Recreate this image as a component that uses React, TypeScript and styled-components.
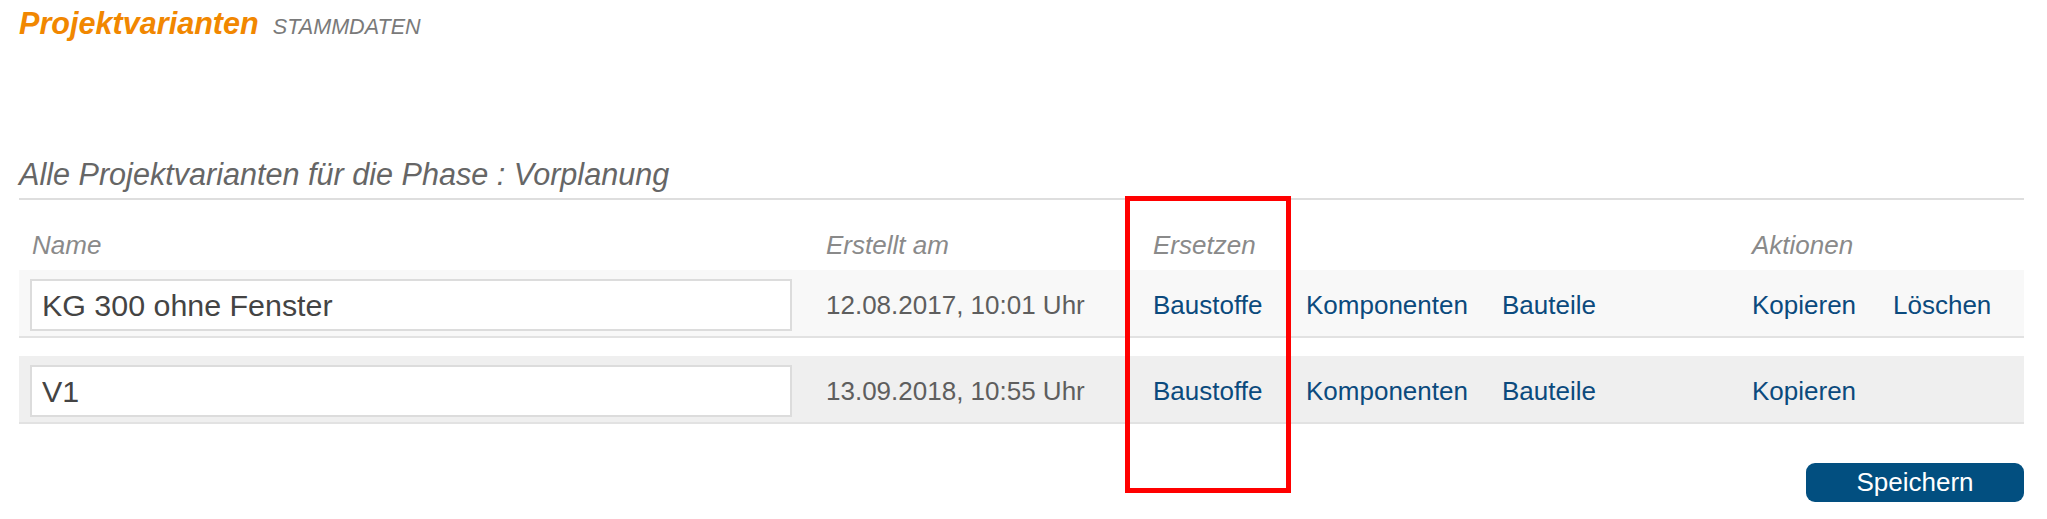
import React from "react";
import styled, {createGlobalStyle} from "styled-components";


const GlobalStyle = createGlobalStyle`
	body {
		margin: 0;
		background: #fff;
		font-family: "Liberation Sans", Arial, sans-serif;
	}
`;

const Page = styled.div`
	position: relative;
	padding: 6px 23px 0 19px;
`;

const Header = styled.div`
	display: flex;
	align-items: baseline;
	gap: 14px;
	line-height: 34px;
`;

const Title = styled.h1`
	margin: 0;
	font-size: 30.6px;
	font-weight: bold;
	font-style: italic;
	color: #f18700;
`;

const Section = styled.span`
	font-size: 21.6px;
	font-style: italic;
	color: #7a7a7a;
	text-transform: uppercase;
`;

const Subtitle = styled.h2`
	margin: 113px 0 0;
	padding-bottom: 7px;
	border-bottom: 2px solid #dedede;
	font-size: 30.6px;
	line-height: 34px;
	font-weight: normal;
	font-style: italic;
	color: #666;
`;

const Grid = styled.div<{$variant?: "head" | "light" | "dark"}>`
	display: grid;
	grid-template-columns: 796px 327px 153px 196px 250px 141px 1fr;
	align-items: center;
	padding: ${(p) => (p.$variant === "head" ? "30px 0 10px 11px" : "9px 0 5px 11px")};
	margin-top: ${(p) => (p.$variant === "dark" ? "18px" : "0")};
	background: ${(p) => (p.$variant === "light" ? "#f8f8f8" : p.$variant === "dark" ? "#efefef" : "transparent")};
	border-bottom: ${(p) => (p.$variant === "head" ? "none" : "2px solid #e2e2e2")};
	font-size: 26px;
	line-height: 30px;
`;

const HeadCell = styled.div<{$indent?: number}>`
	font-style: italic;
	color: #8a8a8a;
	padding-left: ${(p) => p.$indent || 0}px;
`;

const NameInput = styled.input`
	box-sizing: border-box;
	width: 762px;
	height: 52px;
	padding: 0 10px;
	border: 2px solid #dcdcdc;
	background: #fff;
	font-family: inherit;
	font-size: 30.4px;
	color: #444;
	outline: none;
`;

const DateCell = styled.div`
	color: #5e5e5e;
`;

const Link = styled.a`
	color: #0b4a7d;
	text-decoration: none;
	cursor: pointer;
`;

const Footer = styled.div`
	display: flex;
	justify-content: flex-end;
	margin-top: 39px;
`;

const SaveButton = styled.button`
	width: 218px;
	height: 39px;
	border: none;
	border-radius: 9px;
	background: #024f80;
	color: #fff;
	font-family: inherit;
	font-size: 26px;
	cursor: pointer;
`;

const Highlight = styled.div`
	position: absolute;
	left: 1125px;
	top: 196px;
	width: 166px;
	height: 297px;
	box-sizing: border-box;
	border: 5px solid #f00;
	pointer-events: none;
`;

type Variant = {
	id: number;
	name: string;
	created: string;
	deletable: boolean;
};

const variants: Variant[] = [
	{id: 1, name: "KG 300 ohne Fenster", created: "12.08.2017, 10:01 Uhr", deletable: true},
	{id: 2, name: "V1", created: "13.09.2018, 10:55 Uhr", deletable: false},
];


export default function App() {
	return (
		<Page>
			<GlobalStyle/>
			<Header>
				<Title>Projektvarianten</Title>
				<Section>Stammdaten</Section>
			</Header>

			<Subtitle>Alle Projektvarianten für die Phase : Vorplanung</Subtitle>

			<Grid $variant="head">
				<HeadCell $indent={2}>Name</HeadCell>
				<HeadCell>Erstellt am</HeadCell>
				<HeadCell>Ersetzen</HeadCell>
				<div/>
				<div/>
				<HeadCell>Aktionen</HeadCell>
				<div/>
			</Grid>

			{variants.map((v, i) => (
				<Grid key={v.id} $variant={i % 2 === 0 ? "light" : "dark"}>
					<div><NameInput type="text" defaultValue={v.name}/></div>
					<DateCell>{v.created}</DateCell>
					<div><Link>Baustoffe</Link></div>
					<div><Link>Komponenten</Link></div>
					<div><Link>Bauteile</Link></div>
					<div><Link>Kopieren</Link></div>
					<div>{v.deletable && <Link>Löschen</Link>}</div>
				</Grid>
			))}

			<Footer>
				<SaveButton type="button">Speichern</SaveButton>
			</Footer>

			<Highlight/>
		</Page>
	);
}
